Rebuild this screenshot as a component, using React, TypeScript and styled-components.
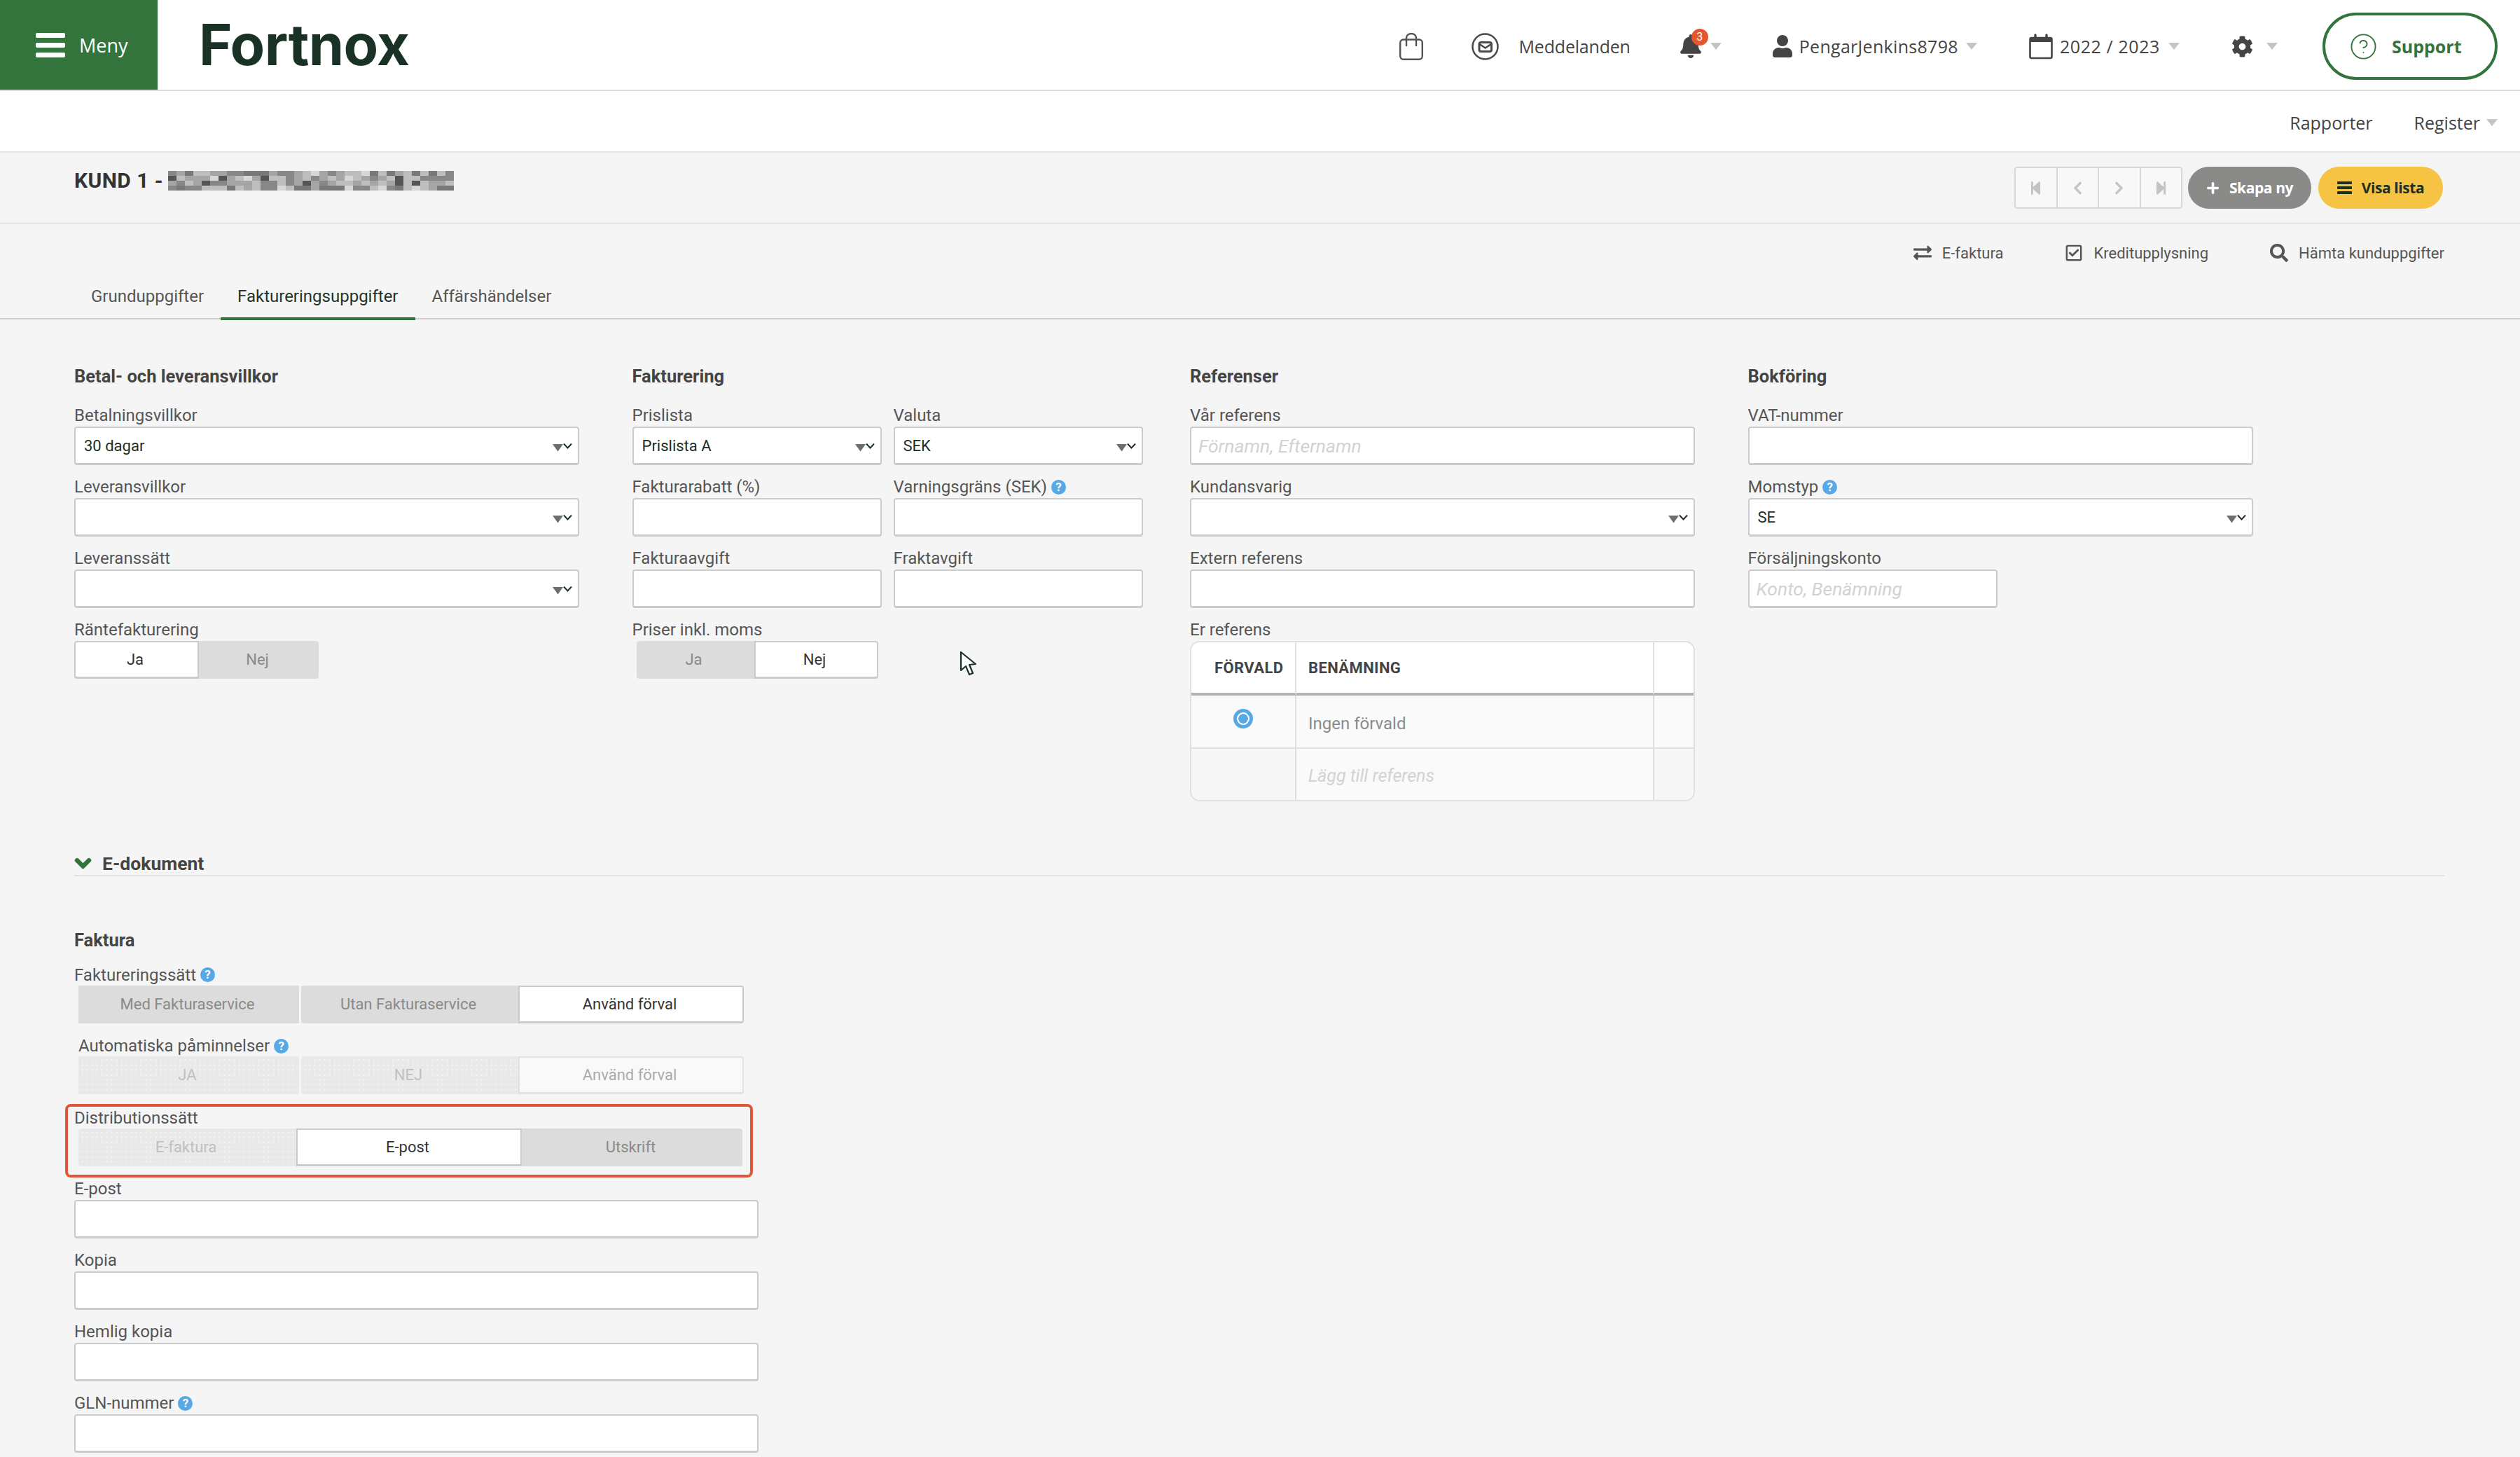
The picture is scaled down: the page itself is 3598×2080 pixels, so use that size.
import React from "react";
import styled, { createGlobalStyle } from "styled-components";
import { CircleHelp } from "lucide-react";
import {
  FaBell, FaUser, FaCog, FaExchangeAlt, FaRegCheckSquare, FaSearch, FaStepBackward, FaStepForward,
  FaChevronLeft, FaChevronRight, FaChevronDown, FaPlus,
} from "react-icons/fa";

const GREEN = "#33733c";

const Global = createGlobalStyle`
  html, body { margin: 0; padding: 0; background: #f5f5f5; }
  body { font-family: Roboto, "Liberation Sans", sans-serif; color: #555; }
  * { box-sizing: border-box; }
`;

const Page = styled.div`
  position: relative;
  width: 3598px;
  height: 2080px;
  overflow: hidden;
  background: #f5f5f5;
`;

const TopBar = styled.header`
  display: flex;
  align-items: stretch;
  height: 130px;
  background: #fff;
  border-bottom: 2px solid #dedede;
`;

const MenuButton = styled.div`
  display: flex;
  align-items: center;
  gap: 20px;
  width: 225px;
  padding-left: 51px;
  background: ${GREEN};
  color: #fff;
  font: 400 27px "Open Sans", sans-serif;
`;

const Logo = styled.div`
  display: flex;
  align-items: center;
  margin-left: 59px;
  color: #1a3226;
  font: 700 81px/1 Inter, sans-serif;
  letter-spacing: -0.6px;
`;

const TopRight = styled.nav`
  display: flex;
  align-items: center;
  margin-left: auto;
  padding: 4px 32px 0 0;
`;

const NavSlot = styled.div<{ $ml?: number; $ls?: number }>`
  position: relative;
  display: flex;
  align-items: center;
  margin-left: ${(p) => p.$ml ?? 0}px;
  color: #444;
  font: 400 25px "Open Sans", sans-serif;
  letter-spacing: ${(p) => p.$ls ?? 0}px;
  white-space: nowrap;
`;

const Caret = styled.span<{ $ml?: number }>`
  display: block;
  width: 0;
  height: 0;
  margin-left: ${(p) => p.$ml ?? 0}px;
  border-left: 8px solid transparent;
  border-right: 8px solid transparent;
  border-top: 10px solid #c4c4c4;
`;

const Badge = styled.span`
  position: absolute;
  top: -8px;
  left: 18px;
  width: 24px;
  height: 24px;
  border-radius: 50%;
  background: #e4572e;
  color: #fff;
  font: 400 16px/24px Roboto, sans-serif;
  text-align: center;
`;

const SupportButton = styled.div`
  display: flex;
  align-items: center;
  gap: 20px;
  width: 250px;
  height: 96px;
  margin-left: 64px;
  padding-left: 34px;
  border: 4px solid ${GREEN};
  border-radius: 48px;
  color: ${GREEN};
  font: 700 25px "Open Sans", sans-serif;
`;

const SubNav = styled.div`
  display: flex;
  align-items: center;
  justify-content: flex-end;
  height: 88px;
  padding: 4px 32px 0 0;
  background: #fff;
  border-bottom: 2px solid #e4e4e4;
  color: #444;
  font: 400 25px "Open Sans", sans-serif;
`;

const SubLink = styled.span<{ $ml?: number }>`
  margin-left: ${(p) => p.$ml ?? 0}px;
`;

const TitleBar = styled.div`
  display: flex;
  align-items: center;
  justify-content: space-between;
  height: 102px;
  padding: 0 110px 0 106px;
  background: #f4f4f4;
  border-bottom: 2px solid #e4e4e4;
`;

const Title = styled.h1`
  display: flex;
  align-items: center;
  gap: 7px;
  margin: -20px 0 0;
  color: #333;
  font: 700 30px/32px Roboto, sans-serif;
  letter-spacing: 0.45px;
`;

const Toolbar = styled.div`
  display: flex;
  align-items: center;
  gap: 10px;
`;

const Pager = styled.div`
  display: flex;
  width: 240px;
  height: 60px;
  margin-right: -2px;
  background: #f8f8f8;
  border: 2px solid #d8d8d8;
  border-radius: 4px;
`;

const PagerCell = styled.span`
  display: flex;
  flex: 1;
  align-items: center;
  justify-content: center;
  color: #c4c4c4;
  font-size: 21px;
  & + & { border-left: 2px solid #d8d8d8; }
`;

const PillButton = styled.div<{ $bg: string; $fg: string; $width: number }>`
  display: flex;
  align-items: center;
  justify-content: center;
  gap: 14px;
  width: ${(p) => p.$width}px;
  height: 60px;
  border-radius: 30px;
  background: ${(p) => p.$bg};
  color: ${(p) => p.$fg};
  font: 700 21px "Open Sans", sans-serif;
  letter-spacing: -0.4px;
`;

const Actions = styled.div`
  display: flex;
  align-items: center;
  justify-content: flex-end;
  gap: 88px;
  height: 76px;
  padding: 6px 108px 0 0;
  color: #555;
  font: 400 22px Roboto, sans-serif;
`;

const ActionLink = styled.span`
  display: flex;
  align-items: center;
  gap: 15px;
  color: #555;
  svg { font-size: 26px; }
`;

const Tabs = styled.div`
  display: flex;
  height: 60px;
  padding-left: 106px;
  border-bottom: 2px solid #cdcdcd;
`;

const Tab = styled.div<{ $active?: boolean }>`
  display: flex;
  align-items: center;
  height: 61px;
  padding: 0 24px 4px;
  border-bottom: 4px solid ${(p) => (p.$active ? GREEN : "transparent")};
  color: ${(p) => (p.$active ? "#1f3329" : "#555")};
  font: 400 24px Roboto, sans-serif;
`;

const Content = styled.main`
  padding: 65px 0 0 106px;
`;

const Columns = styled.div`
  display: grid;
  grid-template-columns: repeat(4, 721px);
  column-gap: 75.5px;
`;

const Column = styled.section`
  display: flex;
  flex-direction: column;
  gap: 15px;
`;

const Heading = styled.h2<{ $mb?: number }>`
  margin: 0 0 ${(p) => p.$mb ?? 9}px;
  color: #444;
  font: 700 25.5px/32px Roboto, sans-serif;
`;

const Pair = styled.div`
  display: grid;
  grid-template-columns: 356px 356px;
  column-gap: 17px;
`;

const Field = styled.div<{ $width?: number }>`
  width: ${(p) => (p.$width ? `${p.$width}px` : "auto")};
`;

const Label = styled.div<{ $inset?: number; $height?: number; $mt?: number }>`
  display: flex;
  align-items: center;
  gap: 6px;
  height: ${(p) => p.$height ?? 32}px;
  margin-top: ${(p) => p.$mt ?? 0}px;
  padding-left: ${(p) => p.$inset ?? 0}px;
  color: #555;
  font: 400 24px Roboto, sans-serif;
  white-space: nowrap;
`;

const Help = styled.span`
  display: inline-block;
  width: 21px;
  height: 21px;
  border-radius: 50%;
  background: #56a8e6;
  color: #fff;
  font: 700 17px/21px Roboto, sans-serif;
  text-align: center;
`;

const Box = styled.div`
  display: flex;
  align-items: center;
  justify-content: space-between;
  height: 55px;
  padding: 0 8px 0 12px;
  background: #fff;
  border: 2px solid #cbcbcb;
  border-bottom-width: 3px;
  border-radius: 4px;
  color: #1c2f25;
  font: 400 22px Roboto, sans-serif;
`;

const Placeholder = styled.span`
  margin-left: -2px;
  color: #d2d2d2;
  font: italic 400 26.5px Roboto, sans-serif;
`;

const ToggleGroup = styled.div<{ $ml?: number; $width?: number }>`
  display: flex;
  width: ${(p) => p.$width ?? 350}px;
  height: 54px;
  margin-left: ${(p) => p.$ml ?? 0}px;
`;

type Mode = "on" | "off" | "disabled" | "disabledOn";

const colors: Record<Mode, { bg: string; fg: string; bd: string }> = {
  on: { bg: "#fff", fg: "#333", bd: "#cbcbcb" },
  off: { bg: "#dcdcdc", fg: "#8a8a8a", bd: "#dcdcdc" },
  disabled: { bg: "#e9e9e9", fg: "#c0c0c0", bd: "#e9e9e9" },
  disabledOn: { bg: "#f9f9f9", fg: "#aaa", bd: "#e2e2e2" },
};

const Segment = styled.div<{ $mode: Mode; $width: number; $ml?: number; $radius?: string }>`
  display: flex;
  align-items: center;
  justify-content: center;
  width: ${(p) => p.$width}px;
  margin-left: ${(p) => p.$ml ?? 0}px;
  padding-right: 4px;
  background-color: ${(p) => colors[p.$mode].bg};
  background-image: ${(p) =>
    p.$mode === "disabled" ? "radial-gradient(#f2f2f2 1px, transparent 1.2px)" : "none"};
  background-size: 7px 7px;
  border: 2px solid ${(p) => colors[p.$mode].bd};
  border-bottom-width: 3px;
  border-radius: ${(p) => p.$radius ?? "0"};
  color: ${(p) => colors[p.$mode].fg};
  font: 400 22px Roboto, sans-serif;
`;

const RefTable = styled.div`
  display: grid;
  grid-template-columns: 150px 511px 1fr;
  grid-template-rows: 76px 76px 1fr;
  height: 229px;
  background: #fff;
  border: 2px solid #e0e0e0;
  border-radius: 14px;
  overflow: hidden;
`;

const Cell = styled.div<{ $kind: "head" | "row" | "last"; $center?: boolean; $shade?: string }>`
  display: flex;
  align-items: center;
  justify-content: ${(p) => (p.$center ? "center" : "flex-start")};
  padding: 0 17px;
  background: ${(p) => p.$shade ?? (p.$kind === "head" ? "#fff" : "#fafafa")};
  border-right: 2px solid #e0e0e0;
  border-bottom: ${(p) =>
    p.$kind === "head" ? "4px solid #b4b4b4" : p.$kind === "row" ? "2px solid #e0e0e0" : "none"};
  &:nth-child(3n) { border-right: none; }
`;

const HeadText = styled.span<{ $ml?: number }>`
  margin-left: ${(p) => p.$ml ?? 0}px;
  color: #444;
  font: 700 22px Roboto, sans-serif;
  letter-spacing: 0.4px;
`;

const RowText = styled.span`
  padding-top: 5px;
  color: #8a8a8a;
  font: 400 24px Roboto, sans-serif;
`;

const AddText = styled.span`
  padding-top: 4px;
  color: #d2d2d2;
  font: italic 400 25px Roboto, sans-serif;
`;

const Radio = styled.span`
  display: block;
  width: 28px;
  height: 28px;
  margin-top: -9px;
  border: 5px solid #56a8e6;
  border-radius: 50%;
  background: radial-gradient(circle, #56a8e6 0 6.5px, #fff 7px);
`;

const SectionHeader = styled.div`
  display: flex;
  align-items: center;
  gap: 15px;
  width: 3384px;
  height: 34px;
  margin-top: 73px;
  padding-bottom: 2px;
  border-bottom: 2px solid #e2e2e2;
  color: #444;
  font: 700 26.5px Roboto, sans-serif;
  svg { color: ${GREEN}; font-size: 25px; stroke-width: 50px; }
`;

const Invoice = styled.div`
  display: flex;
  flex-direction: column;
  width: 977px;
  margin-top: 75px;
`;

const Highlight = styled.div`
  width: 982px;
  height: 105px;
  margin: 14px 0 0 -13px;
  padding-left: 9px;
  border: 4px solid #e0563a;
  border-radius: 8px;
`;

const StackField = styled.div`
  & + & { margin-top: 15px; }
`;

const Cursor = styled.svg`
  position: absolute;
  left: 1370px;
  top: 929px;
`;

const ArrowSvg = styled.svg`
  margin-top: 6px;
`;

const mosaic = (() => {
  const cells: { x: number; y: number; c: string }[] = [];
  let s = 17;
  for (let y = 0; y < 4; y++) {
    for (let x = 0; x < 34; x++) {
      s = (s * 137 + 71) % 1009;
      const v = s % 10;
      const mid = y === 1 || y === 2;
      const g = v < 2 ? (mid ? 85 : 120) : v < 4 ? 135 : v < 7 ? 165 : v < 9 ? 190 : 215;
      cells.push({ x: x * 12, y: y * 7, c: `rgb(${g},${g},${g})` });
    }
  }
  return cells;
})();

const Mosaic = () => (
  <svg width="408" height="28" viewBox="0 0 408 28">
    {mosaic.map((m, i) => (
      <rect key={i} x={m.x} y={m.y} width="12" height="7" fill={m.c} />
    ))}
  </svg>
);

const MenuIcon = () => (
  <svg width="42" height="35" viewBox="0 0 42 35" fill="#fff">
    <rect y="0" width="42" height="7" rx="2" />
    <rect y="14" width="42" height="7" rx="2" />
    <rect y="28" width="42" height="7" rx="2" />
  </svg>
);

const BagIcon = () => (
  <svg width="34" height="39" viewBox="0 0 34 39" fill="none" stroke="#555" strokeWidth="2.4">
    <rect x="1.2" y="9.5" width="31.6" height="28.3" rx="4.5" />
    <path d="M10 19V7a7 6 0 0 1 14 0v12" />
  </svg>
);

const MailIcon = () => (
  <svg width="39" height="39" viewBox="0 0 39 39" fill="none" stroke="#4a4a4a" strokeWidth="2.5">
    <circle cx="19.5" cy="19.5" r="18" />
    <rect x="11" y="13.5" width="17.5" height="13" rx="2.5" strokeWidth="3" />
    <path d="M11.5 16l8.2 5.5 8.2-5.5" strokeWidth="2.4" />
  </svg>
);

const CalendarIcon = () => (
  <svg width="34" height="37" viewBox="0 0 34 37" fill="none">
    <rect x="1.5" y="6" width="31" height="29" rx="2" stroke="#444" strokeWidth="2.6" />
    <rect x="1.5" y="6" width="31" height="6" fill="#444" />
    <path d="M9 2v8M25 2v8" stroke="#444" strokeWidth="3.4" strokeLinecap="round" />
  </svg>
);

const SelectArrow = () => (
  <ArrowSvg width="28" height="12" viewBox="0 0 28 12">
    <path d="M0 1h15l-7.5 10.5z" fill="#6e6e6e" />
    <path d="M16 0.5l5.5 6 5.5-6" fill="none" stroke="#1c2f25" strokeWidth="2" />
  </ArrowSvg>
);

const ListIcon = () => (
  <svg width="21" height="18" viewBox="0 0 21 18" fill="#1a3226">
    <rect width="21" height="4" rx="1" />
    <rect y="7" width="21" height="4" rx="1" />
    <rect y="14" width="21" height="4" rx="1" />
  </svg>
);

const TextField = ({ label, help, width, placeholder, value }: {
  label: string; help?: boolean; width?: number; placeholder?: string; value?: string;
}) => (
  <Field $width={width}>
    <Label>{label}{help && <Help>?</Help>}</Label>
    <Box>
      {placeholder ? <Placeholder>{placeholder}</Placeholder> : <span>{value}</span>}
    </Box>
  </Field>
);

const SelectField = ({ label, help, value }: { label: string; help?: boolean; value?: string }) => (
  <Field>
    <Label>{label}{help && <Help>?</Help>}</Label>
    <Box>
      <span>{value}</span>
      <SelectArrow />
    </Box>
  </Field>
);

export default function App() {
  return (
    <Page>
      <Global />
      <TopBar>
        <MenuButton><MenuIcon />Meny</MenuButton>
        <Logo>Fortnox</Logo>
        <TopRight>
          <NavSlot><BagIcon /></NavSlot>
          <NavSlot $ml={69}><MailIcon /></NavSlot>
          <NavSlot $ml={29} $ls={-0.2}>Meddelanden</NavSlot>
          <NavSlot $ml={69}><FaBell size={34} color="#444" /><Badge>3</Badge></NavSlot>
          <Caret $ml={11} />
          <NavSlot $ml={71}><FaUser size={32} color="#444" /></NavSlot>
          <NavSlot $ml={8} $ls={0.3}>PengarJenkins8798</NavSlot>
          <Caret $ml={11} />
          <NavSlot $ml={74}><CalendarIcon /></NavSlot>
          <NavSlot $ml={10} $ls={0.6}>2022 / 2023</NavSlot>
          <Caret $ml={12} />
          <NavSlot $ml={74}><FaCog size={31} color="#444" /></NavSlot>
          <Caret $ml={19} />
          <SupportButton><CircleHelp size={41} strokeWidth={1.1} />Support</SupportButton>
        </TopRight>
      </TopBar>
      <SubNav>
        <SubLink>Rapporter</SubLink>
        <SubLink $ml={59}>Register</SubLink>
        <Caret $ml={9} />
      </SubNav>
      <TitleBar>
        <Title>KUND 1 - <Mosaic /></Title>
        <Toolbar>
          <Pager>
            <PagerCell><FaStepBackward /></PagerCell>
            <PagerCell><FaChevronLeft /></PagerCell>
            <PagerCell><FaChevronRight /></PagerCell>
            <PagerCell><FaStepForward /></PagerCell>
          </Pager>
          <PillButton $bg="#8a8a88" $fg="#fff" $width={176}><FaPlus size={19} />Skapa ny</PillButton>
          <PillButton $bg="#f6c343" $fg="#1a3226" $width={178}><ListIcon />Visa lista</PillButton>
        </Toolbar>
      </TitleBar>
      <Actions>
        <ActionLink><FaExchangeAlt />E-faktura</ActionLink>
        <ActionLink><FaRegCheckSquare />Kreditupplysning</ActionLink>
        <ActionLink><FaSearch />Hämta kunduppgifter</ActionLink>
      </Actions>
      <Tabs>
        <Tab>Grunduppgifter</Tab>
        <Tab $active>Faktureringsuppgifter</Tab>
        <Tab>Affärshändelser</Tab>
      </Tabs>
      <Content>
        <Columns>
          <Column>
            <Heading>Betal- och leveransvillkor</Heading>
            <SelectField label="Betalningsvillkor" value="30 dagar" />
            <SelectField label="Leveransvillkor" />
            <SelectField label="Leveranssätt" />
            <Field>
              <Label>Räntefakturering</Label>
              <ToggleGroup>
                <Segment $mode="on" $width={178} $radius="4px 0 0 4px">Ja</Segment>
                <Segment $mode="off" $width={171} $radius="0 4px 4px 0">Nej</Segment>
              </ToggleGroup>
            </Field>
          </Column>
          <Column>
            <Heading>Fakturering</Heading>
            <Pair>
              <SelectField label="Prislista" value="Prislista A" />
              <SelectField label="Valuta" value="SEK" />
            </Pair>
            <Pair>
              <TextField label="Fakturarabatt (%)" />
              <TextField label="Varningsgräns (SEK)" help />
            </Pair>
            <Pair>
              <TextField label="Fakturaavgift" />
              <TextField label="Fraktavgift" />
            </Pair>
            <Field>
              <Label>Priser inkl. moms</Label>
              <ToggleGroup $ml={6} $width={345}>
                <Segment $mode="off" $width={168} $radius="4px 0 0 4px">Ja</Segment>
                <Segment $mode="on" $width={177} $radius="0 4px 4px 0">Nej</Segment>
              </ToggleGroup>
            </Field>
          </Column>
          <Column>
            <Heading>Referenser</Heading>
            <TextField label="Vår referens" placeholder="Förnamn, Efternamn" />
            <SelectField label="Kundansvarig" />
            <TextField label="Extern referens" />
            <Field>
              <Label>Er referens</Label>
              <RefTable>
                <Cell $kind="head"><HeadText $ml={16}>FÖRVALD</HeadText></Cell>
                <Cell $kind="head"><HeadText>BENÄMNING</HeadText></Cell>
                <Cell $kind="head" />
                <Cell $kind="row" $center><Radio /></Cell>
                <Cell $kind="row"><RowText>Ingen förvald</RowText></Cell>
                <Cell $kind="row" />
                <Cell $kind="last" $shade="#f7f7f7" />
                <Cell $kind="last"><AddText>Lägg till referens</AddText></Cell>
                <Cell $kind="last" $shade="#f7f7f7" />
              </RefTable>
            </Field>
          </Column>
          <Column>
            <Heading>Bokföring</Heading>
            <TextField label="VAT-nummer" />
            <SelectField label="Momstyp" help value="SE" />
            <TextField label="Försäljningskonto" width={356} placeholder="Konto, Benämning" />
          </Column>
        </Columns>
        <SectionHeader><FaChevronDown />E-dokument</SectionHeader>
        <Invoice>
          <Heading $mb={18}>Faktura</Heading>
          <Label $height={31}>Faktureringssätt<Help>?</Help></Label>
          <ToggleGroup $ml={6} $width={950}>
            <Segment $mode="off" $width={315}>Med Fakturaservice</Segment>
            <Segment $mode="off" $width={310} $ml={3} $radius="4px 0 0 4px">Utan Fakturaservice</Segment>
            <Segment $mode="on" $width={322} $radius="0 4px 4px 0">Använd förval</Segment>
          </ToggleGroup>
          <Label $inset={6} $height={30} $mt={17}>Automatiska påminnelser<Help>?</Help></Label>
          <ToggleGroup $ml={6} $width={950}>
            <Segment $mode="disabled" $width={315}>JA</Segment>
            <Segment $mode="disabled" $width={310} $ml={3} $radius="4px 0 0 4px">NEJ</Segment>
            <Segment $mode="disabledOn" $width={322} $radius="0 4px 4px 0">Använd förval</Segment>
          </ToggleGroup>
          <Highlight>
            <Label $height={31}>Distributionssätt</Label>
            <ToggleGroup $ml={6} $width={948}>
              <Segment $mode="disabled" $width={311} $radius="4px 0 0 4px">E-faktura</Segment>
              <Segment $mode="on" $width={322}>E-post</Segment>
              <Segment $mode="off" $width={315} $radius="0 4px 4px 0">Utskrift</Segment>
            </ToggleGroup>
          </Highlight>
          <StackField><TextField label="E-post" /></StackField>
          <StackField><TextField label="Kopia" /></StackField>
          <StackField><TextField label="Hemlig kopia" /></StackField>
          <StackField><TextField label="GLN-nummer" help /></StackField>
        </Invoice>
      </Content>
      <Cursor width="24" height="37" viewBox="0 0 24 37">
        <path d="M2 2v26l7-6 5 12 5-2-5-12 9-1z" fill="#fff" stroke="#1a3226" strokeWidth="2.2" strokeLinejoin="round" />
      </Cursor>
    </Page>
  );
}
